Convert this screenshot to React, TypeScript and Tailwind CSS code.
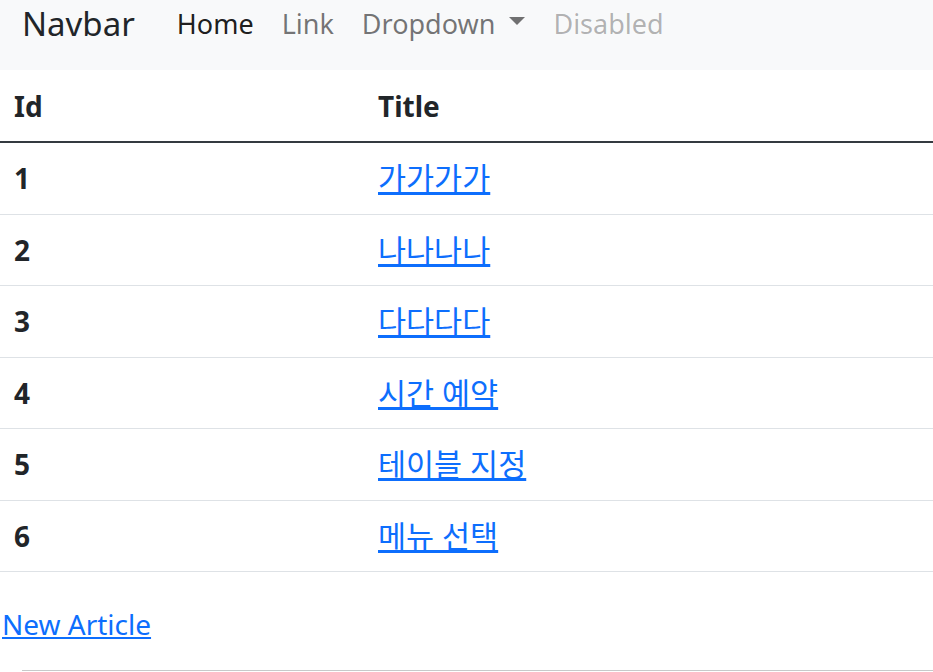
import React from "react";

const rows = [
  { id: 1, title: "가가가가" },
  { id: 2, title: "나나나나" },
  { id: 3, title: "다다다다" },
  { id: 4, title: "시간 예약" },
  { id: 5, title: "테이블 지정" },
  { id: 6, title: "메뉴 선택" },
];

export default function App() {
  return (
    <div className="min-h-screen w-full bg-white text-[28px] leading-[42px] text-[#212529] [font-family:'Noto_Sans','Noto_Sans_CJK_KR',sans-serif]">
      <nav className="flex h-[70px] items-start bg-[#f8f9fa]">
        <a href="#" className="ml-[22px] mr-[28px] text-[33px] leading-[48px] text-[#212529]">
          Navbar
        </a>
        <ul className="flex items-start text-[27px]">
          <li>
            <a href="#" className="block px-[14px] leading-[48px] text-black/90">
              Home
            </a>
          </li>
          <li>
            <a href="#" className="block px-[14px] leading-[48px] text-black/55">
              Link
            </a>
          </li>
          <li>
            <a href="#" className="flex items-center px-[14px] leading-[48px] text-black/55">
              Dropdown
              <span className="ml-[14px] mb-[6px] h-0 w-0 border-x-[8px] border-t-[8px] border-x-transparent border-t-black/55" />
            </a>
          </li>
          <li>
            <a href="#" className="block px-[14px] leading-[48px] text-black/30">
              Disabled
            </a>
          </li>
        </ul>
      </nav>

      <table className="w-full">
        <thead>
          <tr className="border-b-2 border-[#343a40]">
            <th className="w-[364px] px-[14px] pt-[15px] pb-[14px] text-left font-bold">Id</th>
            <th className="px-[14px] pt-[15px] pb-[14px] text-left font-bold">Title</th>
          </tr>
        </thead>
        <tbody>
          {rows.map((r) => (
            <tr key={r.id} className="border-b border-[#dee2e6]">
              <th className="px-[14px] py-[14.25px] text-left font-bold">{r.id}</th>
              <td className="px-[14px] py-[14.25px] text-[30.5px] leading-[42px]">
                <a href="#" className="text-[#0d6efd] underline">
                  {r.title}
                </a>
              </td>
            </tr>
          ))}
        </tbody>
      </table>

      <div className="mt-[31px] pl-[2px]">
        <a href="#" className="text-[#0d6efd] underline">
          New Article
        </a>
      </div>
      <hr className="ml-[22px] mt-[25px] border-t border-[#c8c9ca]" />
    </div>
  );
}
